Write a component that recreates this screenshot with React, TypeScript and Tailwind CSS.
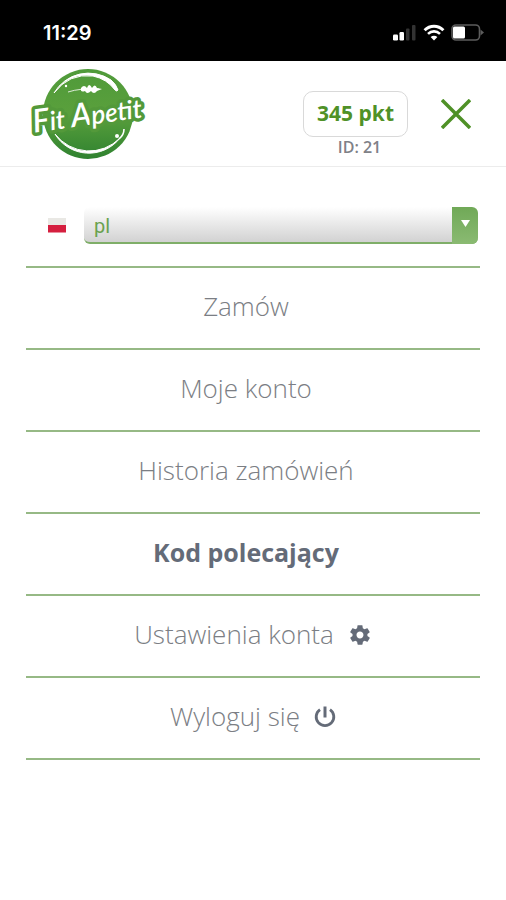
import { useState } from 'react';
import type { ReactNode } from 'react';
import { IoMdSettings } from 'react-icons/io';

// ============================================
// Icons
// ============================================

function SignalIcon() {
  return (
    <svg width="24" height="17" viewBox="0 0 24 17" aria-hidden="true">
      <rect x="0" y="10.500" width="5" height="6" rx="1.200" fill="#fff" />
      <rect x="6.500" y="8" width="4.500" height="8.500" rx="1.200" fill="#fff" />
      <rect x="13" y="4.500" width="3.500" height="12" rx="1" fill="#333" />
      <rect x="19" y="1" width="3.500" height="15.500" rx="1" fill="#333" />
    </svg>
  );
}

function WifiIcon() {
  return (
    <svg width="22" height="17" viewBox="0 0 22 17" fill="none" aria-hidden="true">
      <path d="M1.600 6.200C7 .8 15 .8 20.400 6.200" stroke="#fff" strokeWidth="3" />
      <path d="M5 9.900c3.500-3.400 8.500-3.400 12 0" stroke="#fff" strokeWidth="2.600" />
      <path d="M11 16.500 7.600 13c2-1.800 4.800-1.800 6.800 0L11 16.500Z" fill="#fff" />
    </svg>
  );
}

function BatteryIcon() {
  return (
    <svg width="33" height="17" viewBox="0 0 33 17" fill="none" aria-hidden="true">
      <rect x="1" y="1" width="27.500" height="15" rx="4" stroke="#5c5c5c" strokeWidth="1.600" />
      <rect x="2" y="2.500" width="12" height="12" rx="1.500" fill="#fff" />
      <path d="M29.500 5.500 33 8.500l-3.500 3v-6Z" fill="#5c5c5c" />
    </svg>
  );
}

function PowerIcon() {
  return (
    <svg width="22" height="22" viewBox="0 0 22 22" fill="none" stroke="#646b78" strokeWidth="2.800" aria-hidden="true">
      <path d="M6 3.600a8.800 8.800 0 1 0 10 0" />
      <path d="M11 0.500v11" strokeWidth="3" />
    </svg>
  );
}

function CloseIcon() {
  return (
    <svg width="30" height="30" viewBox="0 0 30 30" fill="none" stroke="#4f9127" strokeWidth="3.500" aria-hidden="true">
      <path d="M1 1 29 29M29 1 1 29" />
    </svg>
  );
}

function PolishFlag() {
  return (
    <svg width="18" height="15" viewBox="0 0 18 15" aria-hidden="true">
      <rect width="18" height="7" fill="#e9e8e4" />
      <rect y="7" width="18" height="7.500" fill="#d51f3f" />
    </svg>
  );
}

function Logo() {
  return (
    <svg width="120" height="94" viewBox="0 0 120 94" role="img" aria-label="Fit Apetit" className="overflow-visible">
      <defs>
        <linearGradient id="leaf" x1="0" y1="0" x2="0" y2="1">
          <stop offset="0" stopColor="#4f9a3a" />
          <stop offset="0.500" stopColor="#5aa03c" />
          <stop offset="1" stopColor="#2f8230" />
        </linearGradient>
      </defs>
      <circle cx="61" cy="47" r="45" fill="url(#leaf)" />
      {/* plate rim */}
      <path
        d="M27 26A40 40 0 0 1 84 13Q89 17 91 23Q90 25 88 23Q80 12 66 9Q42 6 27 26Z"
        fill="#fff"
        stroke="#fff"
        strokeLinejoin="round"
      />
      <path
        d="M28 67A39.500 39.500 0 0 0 93 71A43 43 0 0 1 28 67Z"
        fill="#fff"
        stroke="#fff"
        strokeLinejoin="round"
      />
      <path d="M92 72q5-4 5-10" stroke="#fff" strokeWidth="1.600" fill="none" />
      <circle cx="90" cy="69" r="2" fill="#fff" />
      <circle cx="39" cy="19" r="1.200" fill="#fff" />
      {/* twig */}
      <path d="M41 25q12-4 31-3" stroke="#fff" strokeWidth="0.800" fill="none" />
      <path d="M54 21q3-4 6 0 2-6 5 0 3-5 5 0l5 1-5 2q-3 4-6 0-4 4-6 0-5 2-4-3Z" fill="#fff" />
      <text
        x="60"
        y="58"
        textAnchor="middle"
        fontFamily="Lato, sans-serif"
        fontSize="26"
        fontWeight="600"
        fontStyle="italic"
        fill="#fff"
        stroke="#53993a"
        strokeWidth="7"
        strokeLinejoin="round"
        paintOrder="stroke"
        transform="rotate(-8 61 47)"
      >
        <tspan fontSize="32">F</tspan>it <tspan fontSize="32">A</tspan>petit
      </text>
    </svg>
  );
}

// ============================================
// Sections
// ============================================

function StatusBar() {
  return (
    <div className="flex h-[61px] items-center justify-between bg-black pr-[22px] pl-[43px] pt-1">
      <span className="font-['Inter',sans-serif] text-[20px] leading-6 font-semibold text-white">11:29</span>
      <div className="flex items-center gap-[6px]">
        <SignalIcon />
        <WifiIcon />
        <BatteryIcon />
      </div>
    </div>
  );
}

function Header() {
  return (
    <header className="flex h-[106px] items-center justify-between border-b border-[#ececec] pr-[35px] pl-[27px]">
      <a href="#home">
        <Logo />
      </a>
      <div className="flex items-start gap-[33px] pt-5">
        <div className="flex flex-col items-center">
          <button
            type="button"
            className="h-[46px] rounded-[10px] border border-[#d9d9d9] px-[13px] text-[21px] font-bold text-[#4f9127]"
          >
            345 pkt
          </button>
          <span className="pl-2 text-[16px] leading-5 font-semibold text-[#7f8187]">ID: 21</span>
        </div>
        <button type="button" aria-label="Zamknij" className="mt-2">
          <CloseIcon />
        </button>
      </div>
    </header>
  );
}

function LanguageSelect() {
  const [lang, setLang] = useState('pl');

  return (
    <div className="flex items-center gap-[18px] pr-[2px] pl-[22px]">
      <PolishFlag />
      <div className="relative flex-1">
        <select
          aria-label="Język"
          value={lang}
          onChange={(e) => setLang(e.target.value)}
          className="block h-[37px] w-full appearance-none rounded-[6px] border-b-2 border-[#7fae68] bg-linear-to-b from-white to-[#d2d2d2] pt-[2px] pl-[10px] font-['Roboto',sans-serif] text-[20px] text-[#6aa24f]"
        >
          <option value="pl">pl</option>
          <option value="en">en</option>
        </select>
        <span className="pointer-events-none absolute inset-y-0 right-0 flex w-[26px] justify-center rounded-r-[6px] bg-linear-to-b from-[#70a957] to-[#8aba72] pt-[13px]">
          <svg width="9" height="7" viewBox="0 0 9 7" aria-hidden="true">
            <path d="M0 0h9L4.500 7Z" fill="#fff" />
          </svg>
        </span>
      </div>
    </div>
  );
}

interface MenuItem {
  label: string;
  active?: boolean;
  icon?: ReactNode;
}

const menuItems: MenuItem[] = [
  { label: 'Zamów' },
  { label: 'Moje konto' },
  { label: 'Historia zamówień' },
  { label: 'Kod polecający', active: true },
  { label: 'Ustawienia konta', icon: <IoMdSettings size={24} color="#646b78" /> },
  { label: 'Wyloguj się', icon: <PowerIcon /> },
];

function Menu() {
  return (
    <nav className="mt-[22px]">
      <ul className="border-t-2 border-[#96b985]">
        {menuItems.map((item) => (
          <li key={item.label} className="border-b-2 border-[#96b985]">
            <a
              href="#menu"
              className={`flex h-20 items-center justify-center gap-[14px] pb-[3px] ${
                item.active ? 'text-[25px] font-bold text-[#646b78]' : 'text-[26px] font-light text-[#7b7e84]'
              } ${item.icon ? '' : 'pr-[14px]'}`}
            >
              {item.label}
              {item.icon}
            </a>
          </li>
        ))}
      </ul>
    </nav>
  );
}

export default function App() {
  return (
    <div className="min-h-screen bg-white font-['Open_Sans','Noto_Sans',sans-serif]">
      <StatusBar />
      <Header />
      <main className="px-[26px] pt-10">
        <LanguageSelect />
        <Menu />
      </main>
    </div>
  );
}
